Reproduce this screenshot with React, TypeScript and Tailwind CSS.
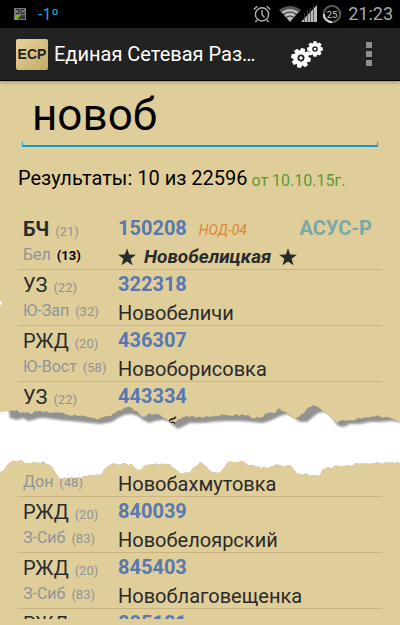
import React from "react";

type Row = {
  road: string;
  roadCode: string;
  branch: string;
  branchCode: string;
  number: string;
  name: string;
  note?: string;
  system?: string;
  main?: boolean;
};

const upperRows: Row[] = [
  { road: "БЧ", roadCode: "(21)", branch: "Бел", branchCode: "(13)", number: "150208", name: "Новобелицкая", note: "НОД-04", system: "АСУС-Р", main: true },
  { road: "УЗ", roadCode: "(22)", branch: "Ю-Зап", branchCode: "(32)", number: "322318", name: "Новобеличи" },
  { road: "РЖД", roadCode: "(20)", branch: "Ю-Вост", branchCode: "(58)", number: "436307", name: "Новоборисовка" },
  { road: "УЗ", roadCode: "(22)", branch: "", branchCode: "", number: "443334", name: "Новоб" },
];

const lowerRows: Row[] = [
  { road: "УЗ", roadCode: "", branch: "Дон", branchCode: "(48)", number: "482206", name: "Новобахмутовка" },
  { road: "РЖД", roadCode: "(20)", branch: "З-Сиб", branchCode: "(83)", number: "840039", name: "Новобелоярский" },
  { road: "РЖД", roadCode: "(20)", branch: "З-Сиб", branchCode: "(83)", number: "845403", name: "Новоблаговещенка" },
  { road: "РЖД", roadCode: "", branch: "", branchCode: "", number: "885181", name: "" },
];

function Star() {
  return (
    <svg viewBox="0 0 18 18" className="h-[18px] w-[18px] shrink-0" fill="#292b2b" aria-hidden="true">
      <path d="M9 0.3 11.2 6.6 17.9 6.8 12.6 10.8 14.5 17.3 9 13.5 3.5 17.3 5.4 10.8 0.1 6.8 6.8 6.6Z" />
    </svg>
  );
}

function StationRow({ row }: { row: Row }) {
  return (
    <li className="flex h-14 shrink-0 border-b border-[#cbb384] pl-[5px]">
      <div className="w-[95px] shrink-0 whitespace-nowrap text-[#8f9498]">
        <p className="h-7 leading-[34px]">
          <span className={row.main ? "text-xl font-bold text-[#292b2b]" : "text-xl text-[#292b2b]"}>{row.road}</span>{" "}
          <span className="ml-[2px] text-[13px]">{row.roadCode}</span>
        </p>
        <p className="h-7 leading-[26px]">
          <span className="text-base">{row.branch}</span>{" "}
          <span className={row.main ? "ml-[2px] text-[13px] font-bold text-black" : "ml-[2px] text-[13px]"}>{row.branchCode}</span>
        </p>
      </div>
      <div className="min-w-0 flex-1 whitespace-nowrap">
        <p className="flex h-7 items-baseline leading-[36px]">
          <span className="text-xl font-bold text-[#5878b0]">{row.number}</span>
          {row.note && <em className="ml-3 text-sm text-[#d98638]">{row.note}</em>}
          {row.system && <span className="mr-[10px] ml-auto text-xl font-bold text-[#78a8a8]">{row.system}</span>}
        </p>
        {row.main ? (
          <p className="flex h-[30px] items-center gap-2 text-[19px] leading-[30px] font-bold text-[#292b2b] italic">
            <Star />
            {row.name}
            <Star />
          </p>
        ) : (
          <p className="h-7 text-xl leading-[30px] text-[#292b2b]">{row.name}</p>
        )}
      </div>
    </li>
  );
}

function Gear({ cx, cy, s, a }: { cx: number; cy: number; s: number; a: number }) {
  return (
    <g transform={`translate(${cx} ${cy}) rotate(${a}) scale(${s})`}>
      {[0, 45, 90, 135, 180, 225, 270, 315].map((t) => (
        <path key={t} d="M-2.8 -6-1.9 -9.8H1.9L2.8 -6Z" transform={`rotate(${t})`} fill="#fff" />
      ))}
      <circle r="5.5" fill="none" stroke="#fff" strokeWidth="4" />
      <circle r="1.7" fill="#fff" />
    </g>
  );
}

function StatusBar() {
  return (
    <div className="flex h-7 items-center bg-black pr-[7px] pl-[14px] text-[#a8a8a8]">
      <svg viewBox="0 0 12 12" className="h-3 w-3" aria-hidden="true">
        <rect width="12" height="12" fill="#777" />
        <path d="M2 1.5h3v4H2M7 1.5h3M7 1.5v4h3v-2" stroke="#222" fill="none" />
        <path d="M1 7h6l-5 5H1Z" fill="#7eb800" />
        <path d="M7 7h4v4H4Z" fill="#383838" />
      </svg>
      <span className="ml-3 pt-[2px] text-base text-[#25a3cf]">-1º</span>
      <div className="ml-auto flex items-center">
        <svg viewBox="0 0 18 18" className="h-[18px] w-[18px]" fill="none" stroke="#b0b0b0" strokeWidth="1.4" aria-hidden="true">
          <circle cx="9" cy="9.4" r="6.6" />
          <path d="M9 5v4.5l2.5 3M.8 4.4 4.3 1.3M17.2 4.4l-3.5-3.1M4 15l-1.5 2M14 15l1.5 2" />
        </svg>
        <svg viewBox="0 0 22 18" className="ml-2 h-[18px] w-[22px]" aria-hidden="true">
          <path d="M0 5Q11-3 22 5L19.5 8Q11 1 2.5 8Z" fill="#555" />
          <path d="M2.5 7Q11 1 19.5 7L11 17Z" fill="#bbb" />
          <path d="M4.5 9.5q6.5-5 13 0M7.5 12.5q3.5-3 7 0" stroke="#222" fill="none" strokeWidth="1.2" />
        </svg>
        <svg viewBox="0 0 16 18" className="h-[18px] w-4" aria-hidden="true">
          <path d="M0 17 16 0V17Z" fill="#bbb" />
          <path d="M3.5 8v9M6.5 5v12M9.5 3v14M12.5 1v16" stroke="#444" strokeWidth=".8" />
        </svg>
        <svg viewBox="0 0 20 20" className="ml-[5px] h-5 w-5" aria-hidden="true">
          <circle cx="10" cy="10" r="8.2" fill="none" stroke="#555" strokeWidth="2.2" />
          <path d="M10 18.2A8.2 8.2 0 0 1 1.8 10" fill="none" stroke="#ccc" strokeWidth="2.2" />
          <text x="10" y="13.5" textAnchor="middle" fontSize="9.5" fill="#ccc">25</text>
        </svg>
        <time className="ml-[6px] text-lg leading-7">21:23</time>
      </div>
    </div>
  );
}

type Point = [number, number];

const upperEdge: Point[] = [
  [0, 10], [8, 9], [12, 8], [17, 8], [20, 11], [28, 10], [32, 12], [36, 9], [46, 9], [51, 11], [57, 10], [65, 12], [80, 14], [92, 16], [99, 17], [104, 15], [111, 14], [117, 9], [123, 7], [130, 5], [136, 9], [143, 15], [148, 12], [158, 12], [166, 17], [174, 23], [178, 17], [187, 14], [198, 15], [212, 14], [225, 13], [247, 13], [253, 16], [263, 15], [266, 11], [275, 11], [279, 6], [287, 11], [295, 17], [304, 11], [309, 5], [313, 3], [317, 4], [325, 10], [337, 21], [343, 18], [361, 17], [373, 14], [386, 15], [400, 20],
];

const lowerEdge: Point[] = [
  [0, 70], [4, 68], [7, 63], [12, 59], [20, 58], [25, 61], [43, 60], [48, 62], [53, 66], [57, 73], [61, 77], [72, 75], [80, 76], [87, 74], [100, 73], [106, 66], [112, 62], [131, 62], [135, 66], [140, 68], [144, 64], [150, 62], [170, 62], [174, 66], [180, 71], [188, 71], [194, 65], [200, 60], [207, 65], [211, 69], [218, 71], [223, 67], [228, 60], [241, 59], [250, 63], [266, 66], [275, 63], [291, 64], [295, 69], [299, 72], [320, 73], [323, 67], [333, 65], [347, 63], [360, 62], [373, 61], [400, 61],
];

// Adds a fine, repeatable roughness between the outline's main points.
function roughen(points: Point[], amount: number): Point[] {
  const out: Point[] = [];
  let seed = 7;
  points.forEach(([x, y], i) => {
    out.push([x, y]);
    const next = points[i + 1];
    if (!next) return;
    for (let px = x + 2; px < next[0] - 1; px += 2) {
      seed = (seed * 73 + 41) % 997;
      const t = (px - x) / (next[0] - x);
      out.push([px, y + (next[1] - y) * t + (seed / 997 - 0.5) * 2 * amount]);
    }
  });
  return out;
}

const toPath = (points: Point[]) => points.map(([x, y]) => `${x} ${y.toFixed(1)}`).join("L");
const holePath = `M${toPath(roughen(upperEdge, 1.2))}L${toPath(roughen(lowerEdge, 1.2).reverse())}Z`;

function Tear() {
  return (
    <svg viewBox="0 0 400 80" preserveAspectRatio="none" className="absolute inset-x-0 top-[402px] h-20 w-full" aria-hidden="true">
      <defs>
        <filter id="soft" x="-5%" y="-20%" width="110%" height="140%">
          <feGaussianBlur stdDeviation="0.9" />
        </filter>
        <clipPath id="hole">
          <path d={holePath} />
        </clipPath>
      </defs>
      <g clipPath="url(#hole)">
        <path d="M0 0H400V80H0Z" fill="#929292" />
        <path d="M-5 5H8L10 16 17 18 23 16 28 19 33 18 39 16 45 16 52 17 60 18 70 19 80 20 90 21 101 22 112 20 118 16 124 13 131 12 138 14 143 18 149 21 155 19 162 18 168 19 174 24 178 27 184 24 190 21 202 21 212 20 225 19 240 19 252 20 263 21 272 18 280 14 287 12 294 16 300 20 307 20 313 15 318 11 323 10 328 12 333 17 338 24 344 25 350 22 360 22 369 20 380 20 392 19 405 21V82H-5Z" fill="#fff" filter="url(#soft)" />
      </g>
    </svg>
  );
}

export default function App() {
  return (
    <main className="relative min-h-screen overflow-hidden bg-[#e0ce9a] font-[Roboto,sans-serif]">
      <StatusBar />
      <header className="flex h-[53px] items-center border-b border-black bg-[#222] pr-[28px] pl-4 text-white shadow-[0_1px_4px_#00000055]">
        <div className="flex h-[31px] w-8 shrink-0 items-center justify-center rounded-xs bg-linear-to-br from-[#e6d49d] to-[#c6aa65] font-['Liberation_Sans',sans-serif] text-sm font-bold text-[#222]">ЕСР</div>
        <h1 className="ml-[6px] flex-1 text-xl whitespace-nowrap">Единая Сетевая Раз…</h1>
        <button aria-label="Настройки" className="mr-10">
          <svg viewBox="0 0 34 28" className="h-7 w-[34px] overflow-visible">
            <Gear cx={9} cy={18} s={1} a={12} />
            <Gear cx={23} cy={9} s={0.8} a={0} />
          </svg>
        </button>
        <button aria-label="Меню" className="flex flex-col gap-[3px]">
          <span className="h-[6px] w-[6px] bg-[#909090]" />
          <span className="h-[6px] w-[6px] bg-[#909090]" />
          <span className="h-[6px] w-[6px] bg-[#909090]" />
        </button>
      </header>
      <div className="mx-[22px] h-[66px]">
        <input aria-label="Поиск станции" defaultValue="новоб" className="block h-[61px] w-full bg-transparent pt-[7px] pl-[10px] text-[44px] text-black outline-none" />
        <div className="h-[5px] border-x border-b-2 border-[#129bd2]" />
      </div>
      <p className="mx-[18px] mb-[6px] flex h-[61px] items-center gap-1 text-xl text-black">
        Результаты: 10 из 22596 <small className="pt-[6px] text-base text-[#579a36]">от 10.10.15г.</small>
      </p>
      <ul className="mx-[18px] flex h-[227px] flex-col overflow-hidden">
        {upperRows.map((r) => <StationRow key={r.number} row={r} />)}
      </ul>
      <ul className="mx-[18px] flex h-[178px] flex-col overflow-hidden">
        {lowerRows.map((r) => <StationRow key={r.number} row={r} />)}
      </ul>
      <Tear />
      <span className="absolute top-[301px] left-0 h-1 w-[2px] rounded-r-full bg-white" />
    </main>
  );
}
